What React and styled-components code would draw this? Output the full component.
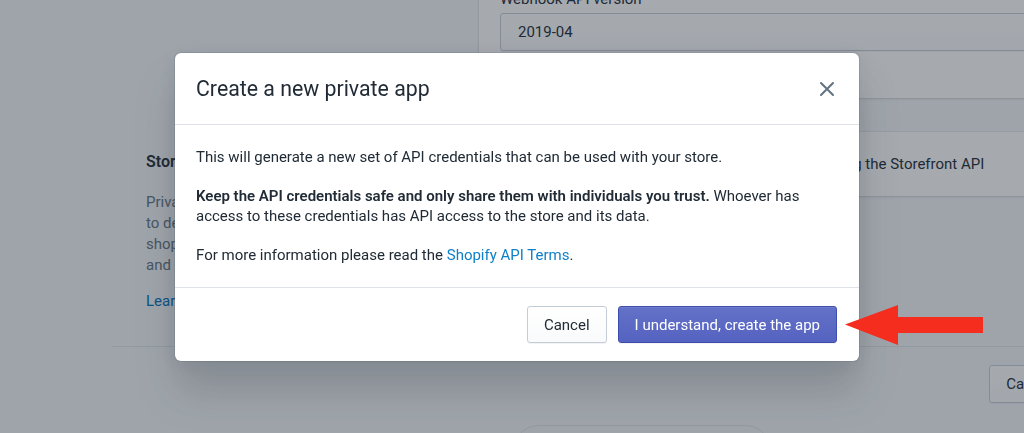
import React from 'react';
import styled, { createGlobalStyle } from 'styled-components';

const Global = createGlobalStyle`
  * { box-sizing: border-box; }
  html, body {
    margin: 0;
    padding: 0;
    width: 1024px;
    height: 433px;
    overflow: hidden;
    background: #f4f6f8;
  }
  body {
    font-family: Roboto, "Noto Sans", "Liberation Sans", sans-serif;
    color: #212b36;
    font-size: 15px;
    line-height: 20px;
  }
`;

const Page = styled.div`
  width: 1033px;
  margin-left: 112px;
  margin-top: -31px;
`;

const Section = styled.div`
  display: grid;
  grid-template-columns: 346px 1fr;
  column-gap: 21px;
  margin-top: ${(p) => p.$gap || 0}px;
  align-items: start;
`;

const Annotation = styled.div`
  padding: 18px 0 0 34px;
`;

const AnnotationTitle = styled.h2`
  margin: 0;
  font-size: 16px;
  line-height: 24px;
  font-weight: 600;
  color: #212b36;
`;

const AnnotationText = styled.p`
  margin: 18px 0 0;
  width: 272px;
  font-size: 15px;
  line-height: 21px;
  color: #637381;
`;

const TextLink = styled.a`
  display: block;
  margin-top: 15px;
  font-size: 15px;
  line-height: 21px;
  color: #006fbb;
  text-decoration: none;
`;

const Card = styled.div`
  background: #fff;
  border-radius: 3px;
  box-shadow: 0 0 0 1px rgba(63, 63, 68, 0.05), 0 1px 3px 0 rgba(63, 63, 68, 0.15);
  padding: 20px 21px ${(p) => p.$bottom || 20}px;
`;

const Label = styled.div`
  font-size: 15px;
  line-height: 20px;
  margin-bottom: 4px;
  color: #212b36;
`;

const Select = styled.div`
  height: 38px;
  display: flex;
  align-items: center;
  padding: 0 17px;
  border: 1px solid #c4cdd5;
  border-radius: 3px;
  background: linear-gradient(180deg, #fff, #f9fafb);
  box-shadow: 0 1px 0 0 rgba(22, 29, 37, 0.05);
  font-size: 15px;
  color: #212b36;
`;

const CheckRow = styled.label`
  display: flex;
  align-items: center;
  gap: 8px;
  min-height: 24px;
  font-size: 15px;
`;

const CheckBox = styled.span`
  width: 16px;
  height: 16px;
  border: 1px solid #c4cdd5;
  border-radius: 3px;
  background: linear-gradient(180deg, #fff, #f9fafb);
  flex: none;
`;

const Actions = styled.div`
  margin-top: 34px;
  border-top: 1px solid #dfe3e8;
  padding: 18px 0 20px;
  display: flex;
  justify-content: flex-end;
  gap: 10px;
`;

const Button = styled.button`
  height: 38px;
  padding: 0 16px;
  border-radius: 3px;
  font-family: inherit;
  font-size: 15px;
  line-height: 20px;
  cursor: pointer;
  border: 1px solid ${(p) => (p.$primary ? '#3f4eae' : '#c4cdd5')};
  color: ${(p) => (p.$primary ? '#fff' : '#212b36')};
  background: ${(p) =>
    p.$primary
      ? 'linear-gradient(180deg, #6371c7, #5563c1)'
      : 'linear-gradient(180deg, #fff, #f9fafb)'};
  box-shadow: ${(p) =>
    p.$primary
      ? 'inset 0 1px 0 0 #6f7bcb, 0 1px 0 0 rgba(22,29,37,.05)'
      : '0 1px 0 0 rgba(22,29,37,.05)'};
`;

const FooterRow = styled.div`
  display: flex;
  justify-content: center;
  padding-left: 26px;
  margin-top: 2px;
`;

const FooterPill = styled.div`
  width: 260px;
  display: flex;
  align-items: center;
  gap: 10px;
  padding: 16px 20px;
  border: 1px solid #dfe3e8;
  border-radius: 999px;
  color: #212b36;
  font-size: 15px;
`;

const Backdrop = styled.div`
  position: fixed;
  inset: 0;
  background: rgba(33, 43, 54, 0.4);
`;

const DialogLayer = styled.div`
  position: fixed;
  inset: 0;
  display: flex;
  align-items: flex-start;
  padding: 53px 0 0 175px;
`;

const Modal = styled.div`
  width: 684px;
  background: #fff;
  border-radius: 6px;
  box-shadow: 0 0 0 1px rgba(6, 44, 82, 0.1), 0 2px 16px rgba(33, 43, 54, 0.08),
    0 31px 41px 0 rgba(33, 43, 54, 0.2);
  display: flex;
  flex-direction: column;
`;

const ModalHeader = styled.div`
  height: 72px;
  display: flex;
  align-items: center;
  justify-content: space-between;
  padding: 0 22px 0 21px;
  border-bottom: 1px solid #dfe3e8;
`;

const ModalTitle = styled.h1`
  margin: 0;
  font-size: 21.3px;
  line-height: 28px;
  font-weight: 400;
  color: #212b36;
`;

const CloseButton = styled.button`
  width: 20px;
  height: 20px;
  padding: 0;
  border: 0;
  background: none;
  display: flex;
  cursor: pointer;
`;

const ModalBody = styled.div`
  padding: 22px 21px 22px;
  border-bottom: 1px solid #dfe3e8;
`;

const BodyText = styled.p`
  margin: ${(p) => (p.$first ? 0 : '19px 0 0')};
  font-size: 15px;
  line-height: 20px;
  color: #212b36;
`;

const Strong = styled.strong`
  font-weight: 600;
`;

const InlineLink = styled.a`
  color: #0f80c8;
  text-decoration: none;
`;

const ModalFooter = styled.div`
  display: flex;
  justify-content: flex-end;
  gap: 11px;
  padding: 18px 22px 18px;
`;

const ModalButton = styled(Button)`
  height: 37px;
`;

const Arrow = styled.svg`
  position: fixed;
  left: 845px;
  top: 305px;
`;

export default function App() {
  return (
    <>
      <Global />
      <Page>
        <Section>
          <div />
          <Card $bottom={47}>
            <Label>Webhook API version</Label>
            <Select>2019-04</Select>
          </Card>
        </Section>
        <Section $gap={34}>
          <Annotation>
            <AnnotationTitle>Storefront API</AnnotationTitle>
            <AnnotationText>
              Private apps can use the Storefront API to develop custom storefronts and shopping
              experiences for your buyers and sell on any platform.
            </AnnotationText>
            <TextLink href="#">Learn more</TextLink>
          </Annotation>
          <Card>
            <CheckRow>
              <CheckBox />
              Allow this app to access your storefront data using the Storefront API
            </CheckRow>
          </Card>
        </Section>
        <Actions>
          <Button>Cancel</Button>
          <Button $primary>Save</Button>
        </Actions>
        <FooterRow>
          <FooterPill>Learn more about private apps.</FooterPill>
        </FooterRow>
      </Page>

      <Backdrop />
      <DialogLayer>
        <Modal role="dialog">
          <ModalHeader>
            <ModalTitle>Create a new private app</ModalTitle>
            <CloseButton aria-label="Close">
              <svg width="20" height="20" viewBox="0 0 20 20">
                <path
                  d="M4 4L16 16M16 4L4 16"
                  stroke="#637381"
                  strokeWidth="2"
                  strokeLinecap="round"
                  fill="none"
                />
              </svg>
            </CloseButton>
          </ModalHeader>
          <ModalBody>
            <BodyText $first>
              This will generate a new set of API credentials that can be used with your store.
            </BodyText>
            <BodyText>
              <Strong>Keep the API credentials safe and only share them with individuals you trust.</Strong>{' '}
              Whoever has access to these credentials has API access to the store and its data.
            </BodyText>
            <BodyText>
              For more information please read the <InlineLink href="#">Shopify API Terms</InlineLink>.
            </BodyText>
          </ModalBody>
          <ModalFooter>
            <ModalButton>Cancel</ModalButton>
            <ModalButton $primary>I understand, create the app</ModalButton>
          </ModalFooter>
        </Modal>
      </DialogLayer>

      <Arrow width="139" height="41" viewBox="0 0 139 41">
        <polygon points="0,19.5 53,0 53,12 138,12 138,28 53,28 53,40" fill="#f42d1f" />
      </Arrow>
    </>
  );
}
